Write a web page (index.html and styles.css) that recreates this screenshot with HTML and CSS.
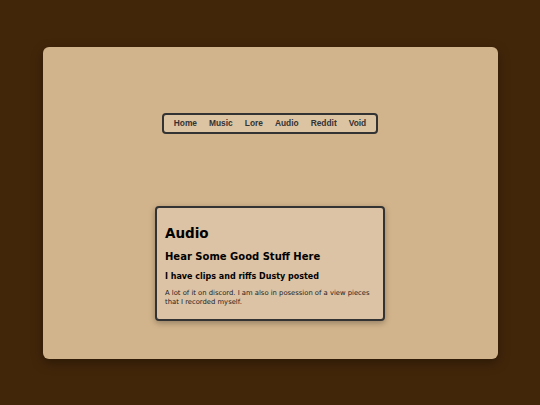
FILE: index.html
```html
<!DOCTYPE html>
<html>
<head>
<meta charset="utf-8">
<link rel="stylesheet" href="styles.css">
</head>
<body>
<div class="stage">
  <main class="panel">
    <nav class="nav">
      <a>Home</a><a>Music</a><a>Lore</a><a>Audio</a><a>Reddit</a><a>Void</a>
    </nav>
    <section class="card">
      <h1>Audio</h1>
      <h2>Hear Some Good Stuff Here</h2>
      <h3>I have clips and riffs Dusty posted</h3>
      <p>A lot of it on discord. I am also in posession of a view pieces that I recorded myself.</p>
    </section>
  </main>
</div>
</body>
</html>
```
FILE: styles.css
```css
html, body {
  margin: 0;
  padding: 0;
  background: #42260a;
  height: 100%;
}
.stage {
  height: 405px;
  display: flex;
  align-items: center;
  justify-content: center;
}
.panel {
  width: 455px;
  height: 312px;
  box-sizing: border-box;
  background: #d2b48c;
  border-radius: 6px;
  box-shadow: 0 4px 12px rgba(0,0,0,0.35);
  display: flex;
  flex-direction: column;
  align-items: center;
  padding-top: 66px;
}
.nav {
  display: flex;
  border: 2px solid #333;
  border-radius: 4px;
  background: #dcc3a2;
  padding: 0 3.5px;
  height: 21px;
  box-sizing: border-box;
  align-items: center;
  font-family: "Liberation Sans", Arial, sans-serif;
  font-weight: bold;
  font-size: 8.4px;
  color: #333;
}
.nav a {
  padding: 0 6px;
}
.card {
  margin-top: 72px;
  width: 230px;
  height: 115px;
  box-sizing: border-box;
  background: #dcc3a5;
  border: 2px solid #333;
  border-radius: 4px;
  box-shadow: 0 2px 6px rgba(0,0,0,0.3);
  padding: 17px 8px 0 8px;
  font-family: "DejaVu Sans", Verdana, sans-serif;
  color: #000;
}
.card h1 {
  font-size: 13.5px;
  line-height: 16px;
  margin: 0 0 10px;
}
.card h2 {
  font-size: 10px;
  line-height: 12px;
  margin: 0 0 9px;
}
.card h3 {
  font-size: 8px;
  line-height: 10px;
  margin: 0 0 7px;
}
.card p {
  font-size: 6.8px;
  margin: 0;
  color: #222;
  line-height: 9px;
}
```
